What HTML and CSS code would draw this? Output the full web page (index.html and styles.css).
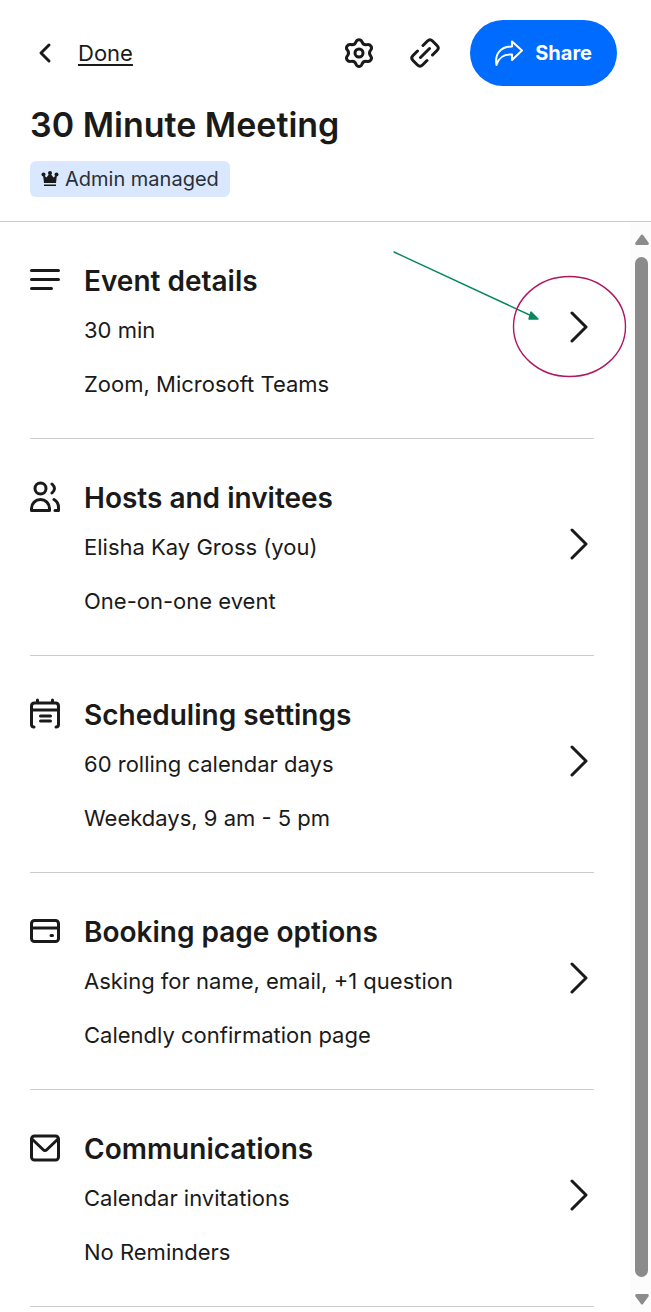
FILE: index.html
```html
<!DOCTYPE html>
<html lang="en">
<head>
    <meta charset="UTF-8">
    <meta name="viewport" content="width=device-width, initial-scale=1.0">
    <title>30 Minute Meeting</title>
    <link rel="stylesheet" href="styles.css">
</head>
<body>
    <header class="page-header">
        <nav class="toolbar">
            <a class="done-link" href="#">
                <svg class="back-icon" viewBox="0 0 14 22" aria-hidden="true"><path d="M11 3L3 11l8 8"/></svg>
                <span>Done</span>
            </a>
            <div class="toolbar-actions">
                <button class="icon-button" type="button" aria-label="Settings">
                    <svg viewBox="0 0 30 30"><path d="M12.200 3.500C13.200 1 16.800 1 17.800 3.500C18.800 6.500 20.200 7.200 23.200 6.600C26.500 6 28.600 9.500 26.800 11.800C25 14 25 16 26.800 18.200C28.600 20.500 26.500 24 23.200 23.400C20.200 22.800 18.800 23.500 17.800 26.500C16.800 29 13.200 29 12.200 26.500C11.200 23.500 9.800 22.800 6.800 23.400C3.500 24 1.400 20.500 3.200 18.200C5 16 5 14 3.200 11.800C1.400 9.500 3.500 6 6.800 6.600C9.800 7.200 11.200 6.500 12.200 3.500Z"/><circle cx="15" cy="15" r="4"/></svg>
                </button>
                <button class="icon-button" type="button" aria-label="Copy link">
                    <svg viewBox="0 0 30 30"><path d="M10.500 19.500l9-9M13 7.500l4.500-4.500q2.500-2.500 5 0l4.500 4.500q2.500 2.500 0 5L22.500 17M17 22.500l-4.500 4.500q-2.500 2.500-5 0L3 22.500q-2.500-2.500 0-5L7.500 13"/></svg>
                </button>
                <button class="share-button" type="button">
                    <svg viewBox="0 0 30 30" aria-hidden="true"><path d="M18 3.500L28 12.500L18 22V16.500C9.500 16 5 19 2.500 27C.500 15.500 7 8.500 18 8.500Z"/></svg>
                    Share
                </button>
            </div>
        </nav>
        <h1>30 Minute Meeting</h1>
        <div class="badge">
            <svg viewBox="0 0 18 16" aria-hidden="true"><path d="M2 3.500l3.500 3L9 2l3.500 4.500L16 3.500L15 12h-12ZM3 13.500h12v1.500h-12Z"/><circle cx="2.500" cy="3.500" r="2"/><circle cx="9" cy="2" r="2"/><circle cx="15.500" cy="3.500" r="2"/></svg>
            <span>Admin managed</span>
        </div>
    </header>

    <div class="panel">
        <main class="sections">
            <a class="section" href="#">
                <svg class="section-icon" viewBox="0 0 32 32" aria-hidden="true"><path d="M2.500 6.500h27M2.500 15.500h27M2.500 24.500h20"/></svg>
                <div class="section-text">
                    <h2>Event details</h2>
                    <p>30 min</p>
                    <p>Zoom, Microsoft Teams</p>
                </div>
                <svg class="chevron" viewBox="0 0 20 32" aria-hidden="true"><path d="M3 2l14 14L3 30"/></svg>
                <svg class="callout" viewBox="0 0 236 130" aria-hidden="true"><path class="callout-line" d="M2 4l140 65"/><path class="callout-head" d="M139 64l7 7h-9Z"/><ellipse cx="177.500" cy="78.500" rx="56" ry="50"/></svg>
            </a>
            <a class="section" href="#">
                <svg class="section-icon" viewBox="0 0 32 32" aria-hidden="true"><circle cx="11.500" cy="7.500" r="5.500"/><path d="M2.500 29.500v-2c0-5 4-9 9-9s9 4 9 9v2ZM23 3q5 4.500 0 9M25 18.500c3.500 2 4.500 5 4.500 8v3H26"/></svg>
                <div class="section-text">
                    <h2>Hosts and invitees</h2>
                    <p>Elisha Kay Gross (you)</p>
                    <p>One-on-one event</p>
                </div>
                <svg class="chevron" viewBox="0 0 20 32" aria-hidden="true"><path d="M3 2l14 14L3 30"/></svg>
            </a>
            <a class="section" href="#">
                <svg class="section-icon" viewBox="0 0 32 32" aria-hidden="true"><path d="M5 29c-1.500 0-2.500-1-2.500-2.500V8q0-3 3-3h21q3 0 3 3v18.500C29.500 28 28.500 29 27 29M2.500 12h27M8.500 2v3M23.500 2v3M11.500 18h10M11.500 23h10"/></svg>
                <div class="section-text">
                    <h2>Scheduling settings</h2>
                    <p>60 rolling calendar days</p>
                    <p>Weekdays, 9 am - 5 pm</p>
                </div>
                <svg class="chevron" viewBox="0 0 20 32" aria-hidden="true"><path d="M3 2l14 14L3 30"/></svg>
            </a>
            <a class="section" href="#">
                <svg class="section-icon" viewBox="0 0 32 32" aria-hidden="true"><rect x="2.500" y="5.500" width="27" height="21" rx="3"/><path d="M2.500 13h27M22 20.500h1.500"/></svg>
                <div class="section-text">
                    <h2>Booking page options</h2>
                    <p>Asking for name, email, +1 question</p>
                    <p>Calendly confirmation page</p>
                </div>
                <svg class="chevron" viewBox="0 0 20 32" aria-hidden="true"><path d="M3 2l14 14L3 30"/></svg>
            </a>
            <a class="section" href="#">
                <svg class="section-icon" viewBox="0 0 32 32" aria-hidden="true"><rect x="2.500" y="4" width="27" height="24" rx="3"/><path d="M3.500 7.500L14 17.500q2 2 4 0L28.500 7.500"/></svg>
                <div class="section-text">
                    <h2>Communications</h2>
                    <p>Calendar invitations</p>
                    <p>No Reminders</p>
                </div>
                <svg class="chevron" viewBox="0 0 20 32" aria-hidden="true"><path d="M3 2l14 14L3 30"/></svg>
            </a>
        </main>
        <div class="scrollbar" aria-hidden="true">
            <svg viewBox="0 0 14 11"><path d="M6 1q1-1 2 0l5.500 7.500q1 2-1 2.500h-11q-2-.500-1-2.500Z"/></svg>
            <div class="scrollbar-thumb"></div>
            <svg viewBox="0 0 14 11"><path d="M6 10q1 1 2 0l5.500-7.500q1-2-1-2.500h-11q-2 .500-1 2.500Z"/></svg>
        </div>
    </div>
</body>
</html>
```
FILE: styles.css
```css
* {
    margin: 0;
    padding: 0;
    box-sizing: border-box;
}

body {
    display: flex;
    flex-direction: column;
    min-height: 100vh;
    font-family: Inter, "Open Sans", sans-serif;
    font-size: 22px;
    line-height: 24px;
    color: #1a1a1a;
    background: #fff;
}

a {
    color: inherit;
    text-decoration: none;
}

svg {
    flex: none;
    fill: none;
    stroke: currentColor;
    stroke-width: 3;
    stroke-linecap: round;
    stroke-linejoin: round;
}

button {
    font: inherit;
    color: inherit;
    background: none;
    border: none;
    cursor: pointer;
}

/* Header */
.page-header {
    padding: 20px 34px 24px 30px;
    border-bottom: 1px solid #ccc;
}

.toolbar {
    display: flex;
    justify-content: space-between;
    align-items: center;
}

.done-link {
    display: flex;
    align-items: center;
    gap: 26px;
    padding-left: 8px;
}

.done-link span {
    text-decoration: underline;
    text-decoration-thickness: 2px;
    text-underline-offset: 3px;
}

.back-icon {
    width: 14px;
    height: 22px;
}

.toolbar-actions {
    display: flex;
    align-items: center;
}

.icon-button {
    margin-right: 36px;
}

.icon-button + .icon-button {
    margin-right: 30px;
}

.icon-button svg,
.share-button svg {
    display: block;
    width: 30px;
    height: 30px;
}

.share-button {
    display: flex;
    align-items: center;
    gap: 11px;
    height: 66px;
    padding: 0 25px 0 24px;
    font-size: 20px;
    font-weight: 700;
    color: #fff;
    background: #006bff;
    border-radius: 33px;
}

.share-button svg {
    stroke-width: 2;
}

h1,
h2 {
    font-weight: 600;
}

h1 {
    margin: 19px 0 16px;
    font-size: 34px;
    line-height: 40px;
}

.badge {
    display: inline-flex;
    align-items: center;
    gap: 6px;
    height: 36px;
    padding: 0 11px;
    vertical-align: top;
    font-size: 20px;
    color: #2b2f36;
    background: #d9e8ff;
    border-radius: 6px;
}

.badge svg {
    width: 18px;
    height: 16px;
    fill: #1a1a1a;
    stroke: none;
}

/* Section list */
.panel {
    display: flex;
    flex: 1;
}

.sections {
    flex: 1;
    padding: 0 36px 0 30px;
}

.section {
    position: relative;
    display: flex;
    padding: 42px 0;
    border-bottom: 1px solid #ccc;
}

.section-icon {
    width: 32px;
    height: 32px;
    margin: 0 23px 0 -1px;
}

.section-text {
    flex: 1;
}

.section-text h2 {
    margin-bottom: 20px;
    font-size: 28px;
    line-height: 34px;
}

.section-text p + p {
    margin-top: 30px;
}

.chevron {
    align-self: center;
    width: 20px;
    height: 32px;
    margin: 0 5px 6px 0;
}

/* Arrow and ring drawn over the first row */
.callout {
    position: absolute;
    top: 26px;
    right: -34px;
    width: 236px;
    height: 130px;
    stroke: #b01661;
    stroke-width: 1.4;
}

.callout-line {
    stroke: #08875d;
}

.callout-head {
    fill: #08875d;
    stroke: #08875d;
}

/* Scrollbar */
.scrollbar {
    display: flex;
    flex-direction: column;
    align-items: center;
    gap: 12px;
    width: 21px;
    padding: 12px 0 7px 2px;
    background: #fcfcfc;
}

.scrollbar svg {
    width: 14px;
    height: 11px;
    fill: #8b8b8b;
    stroke: none;
}

.scrollbar-thumb {
    flex: 1;
    width: 13px;
    margin-bottom: 5px;
    background: #8b8b8b;
    border-radius: 7px;
}
```
